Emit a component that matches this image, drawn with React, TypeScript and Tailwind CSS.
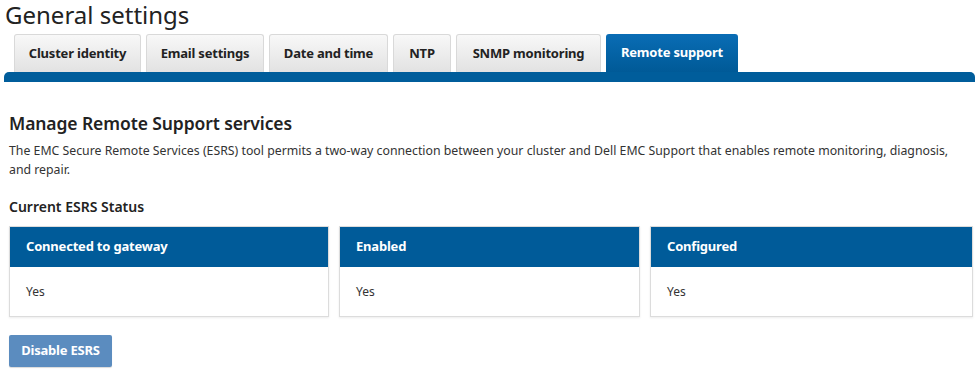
import React from 'react';

const tabs = [
  { label: 'Cluster identity', w: 'w-[127px]' },
  { label: 'Email settings', w: 'w-[118px]' },
  { label: 'Date and time', w: 'w-[119px]' },
  { label: 'NTP', w: 'w-[58px]' },
  { label: 'SNMP monitoring', w: 'w-[145px]' },
];

const statuses = [
  { label: 'Connected to gateway', value: 'Yes', w: 'w-[320px]' },
  { label: 'Enabled', value: 'Yes', w: 'w-[301px]' },
  { label: 'Configured', value: 'Yes', w: 'w-[323px]' },
];

export default function App() {
  return (
    <div className="w-[975px] h-[371px] bg-white overflow-hidden text-[#222] font-['Noto_Sans','Open_Sans',sans-serif]">
      <h1 className="pl-[5px] text-[24px] leading-[30px] text-[#222]">General settings</h1>

      <div className="flex items-end gap-[5px] pl-[14px] mt-[4px]">
        {tabs.map((t) => (
          <div
            key={t.label}
            className={`${t.w} h-[38px] flex items-center justify-center rounded-t-[3px] border border-b-0 border-[#d9d9d9] bg-gradient-to-b from-[#f8f8f8] to-[#e2e2e2] text-[13px] font-bold tracking-[-0.2px]`}
          >
            {t.label}
          </div>
        ))}
        <div className="w-[132px] h-[38px] flex items-center justify-center rounded-t-[3px] bg-gradient-to-b from-[#0a6db5] to-[#005a97] text-white text-[13px] font-bold tracking-[-0.2px]">
          Remote support
        </div>
      </div>
      <div className="ml-[4px] h-[10px] bg-[#005d9b] rounded-t-[5px]" />

      <div className="pl-[9px] pr-[2px]">
        <h2 className="mt-[29px] text-[17.5px] leading-[24px] font-semibold tracking-[-0.1px]">Manage Remote Support services</h2>
        <p className="mt-[6px] max-w-[957px] text-[12.3px] leading-[19px] text-[#333]">
          The EMC Secure Remote Services (ESRS) tool permits a two-way connection between your cluster and Dell EMC Support that enables remote monitoring, diagnosis, and repair.
        </p>
        <h3 className="mt-[18px] text-[14px] leading-[20px] font-semibold">Current ESRS Status</h3>

        <div className="flex gap-[10px] mt-[9px]">
          {statuses.map((s) => (
            <div key={s.label} className={`${s.w} shrink-0 border border-[#dcdcdc] shadow-[0_1px_2px_rgba(0,0,0,0.08)]`}>
              <div className="h-[40px] bg-[#005b99] flex items-center pl-[16px] text-white text-[13px] font-bold tracking-[-0.2px]">
                {s.label}
              </div>
              <div className="h-[49px] flex items-center pl-[16px] text-[12px] text-[#333]">{s.value}</div>
            </div>
          ))}
        </div>

        <button className="mt-[18px] w-[103px] h-[32px] rounded-[2px] bg-[#5b8cbf] text-white text-[13px] font-bold tracking-[-0.2px] shadow-[0_1px_1px_rgba(0,0,0,0.15)]">
          Disable ESRS
        </button>
      </div>
    </div>
  );
}
